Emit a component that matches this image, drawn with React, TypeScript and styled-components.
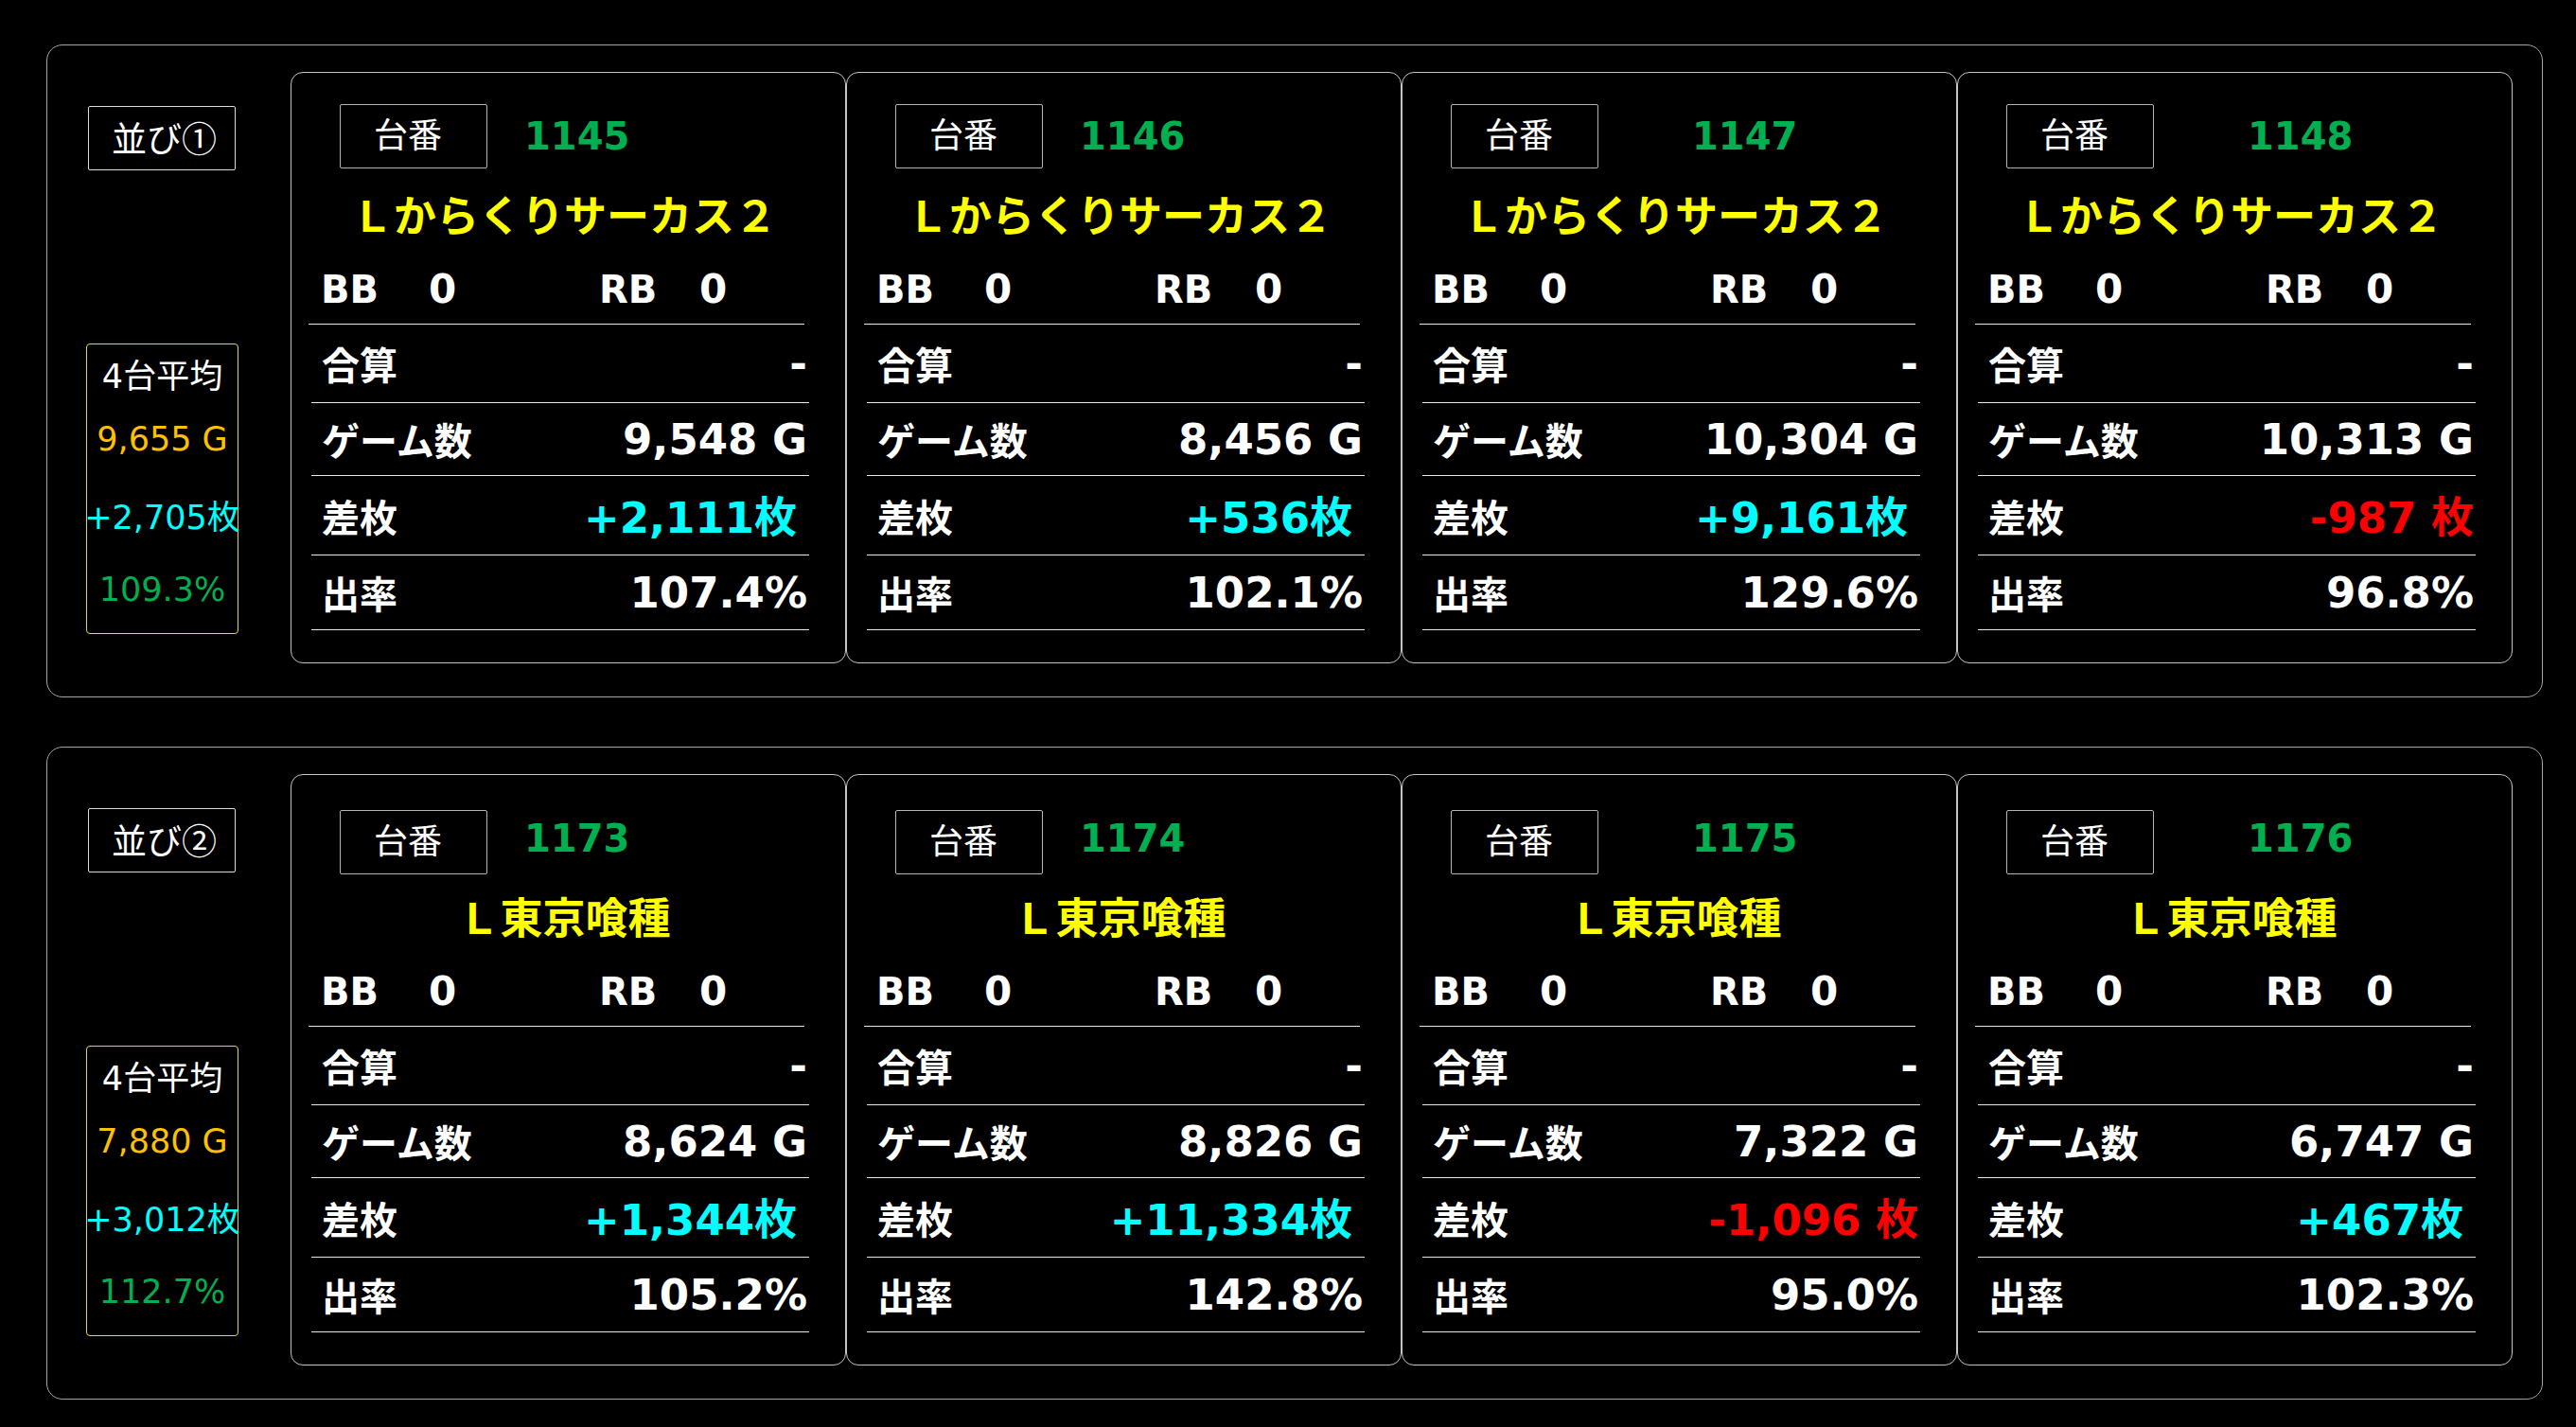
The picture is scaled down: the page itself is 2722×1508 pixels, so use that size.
import React from 'react';
import styled, { createGlobalStyle } from 'styled-components';

const GlobalStyle = createGlobalStyle`
  html, body { margin: 0; padding: 0; background: #000; }
  body {
    font-family: "DejaVu Sans", "Noto Sans CJK JP", sans-serif;
    color: #fff;
  }
`;

const Page = styled.div`
  width: 2722px;
  min-height: 1508px;
  box-sizing: border-box;
  padding: 47px 35px 0 49px;
  display: flex;
  flex-direction: column;
  gap: 52px;
  background: #000;
`;

const Panel = styled.section`
  box-sizing: border-box;
  width: 2638px;
  height: 690px;
  border: 1px solid #a4a4a4;
  border-radius: 17px;
  display: flex;
  padding: 28px 32px 0 0;
`;

const SideColumn = styled.div`
  width: 257px;
  flex: none;
  display: flex;
  flex-direction: column;
`;

const GroupLabel = styled.div`
  box-sizing: border-box;
  width: 156px;
  height: 68px;
  margin: 36px 0 0 43px;
  border: 1px solid #dcdcdc;
  border-radius: 2px;
  padding-left: 24px;
  font-family: "Noto Sans CJK JP", sans-serif;
  font-size: 37px;
  line-height: 64px;
  white-space: nowrap;
`;

const AvgBox = styled.div`
  box-sizing: border-box;
  width: 161px;
  height: 307px;
  margin: 183px 0 0 41px;
  border: 1px solid #e2e200;
  border-radius: 4px;
  display: flex;
  flex-direction: column;
`;

const AvgRow = styled.div<{ $h: number; $color: string }>`
  height: ${(p) => p.$h}px;
  display: flex;
  align-items: center;
  justify-content: center;
  font-size: 35px;
  line-height: 1;
  color: ${(p) => p.$color};
  white-space: nowrap;
`;

const CardRow = styled.div`
  display: grid;
  grid-template-columns: repeat(4, 587px);
`;

const Card = styled.article`
  box-sizing: border-box;
  height: 625px;
  border: 1px solid #c4c4c4;
  border-radius: 13px;
  padding: 33px 38px 0 21px;
  display: flex;
  flex-direction: column;
`;

const Header = styled.div`
  height: 68px;
  display: flex;
  align-items: center;
  margin-left: 30px;
`;

const NoLabel = styled.div<{ $shift: number }>`
  box-sizing: border-box;
  flex: none;
  align-self: flex-start;
  width: 156px;
  height: 68px;
  margin-top: ${(p) => p.$shift}px;
  border: 1px solid #b4b4b4;
  border-radius: 2px;
  padding-left: 35px;
  font-size: 36px;
  line-height: 66px;
`;

const MachineNo = styled.div<{ $offset: number }>`
  margin-left: ${(p) => p.$offset}px;
  font-size: 40px;
  font-weight: 700;
  line-height: 1;
  color: #00b050;
`;

const Title = styled.h2`
  margin: 0 -29px 0 -21px;
  height: 94px;
  display: flex;
  align-items: center;
  justify-content: center;
  font-family: "Noto Sans CJK JP", sans-serif;
  font-weight: 700;
  font-size: 45px;
  line-height: 1;
  color: #ffff00;
  white-space: nowrap;
`;

const BonusRow = styled.div`
  box-sizing: border-box;
  height: 71px;
  margin: 0 5px 0 -3px;
  padding: 0 0 3px 13px;
  border-bottom: 1px solid #e6e6e6;
  display: grid;
  grid-template-columns: 114px 180px 106px auto;
  align-items: center;
  font-weight: 700;
  font-size: 40px;
  line-height: 1;
`;

const BonusCount = styled.span`
  font-size: 42px;
`;

const DataRow = styled.div<{ $h: number }>`
  box-sizing: border-box;
  height: ${(p) => p.$h}px;
  border-bottom: 1px solid #e6e6e6;
  display: flex;
  justify-content: space-between;
  align-items: center;
  padding: 0 2px 0 11px;
  line-height: 1;
`;

const RowLabel = styled.span`
  font-family: "Noto Sans CJK JP", sans-serif;
  font-weight: 700;
  font-size: 40px;
`;

const RowValue = styled.span<{ $color: string; $trail: number; $dy: number }>`
  font-weight: 700;
  font-size: 45px;
  color: ${(p) => p.$color};
  padding-right: ${(p) => p.$trail}px;
  margin-top: ${(p) => p.$dy}px;
  white-space: nowrap;
`;

type Machine = {
  no: string;
  games: string;
  diff: string;
  rate: string;
};

type Group = {
  label: string;
  title: string;
  boxShift: number;
  avg: { games: string; diff: string; rate: string };
  machines: Machine[];
};

const groups: Group[] = [
  {
    label: '並び①',
    title: 'Ｌからくりサーカス２',
    boxShift: 0,
    avg: { games: '9,655 G', diff: '+2,705枚', rate: '109.3%' },
    machines: [
      { no: '1145', games: '9,548 G', diff: '+2,111枚', rate: '107.4%' },
      { no: '1146', games: '8,456 G', diff: '+536枚', rate: '102.1%' },
      { no: '1147', games: '10,304 G', diff: '+9,161枚', rate: '129.6%' },
      { no: '1148', games: '10,313 G', diff: '-987 枚', rate: '96.8%' },
    ],
  },
  {
    label: '並び②',
    title: 'Ｌ東京喰種',
    boxShift: 4,
    avg: { games: '7,880 G', diff: '+3,012枚', rate: '112.7%' },
    machines: [
      { no: '1173', games: '8,624 G', diff: '+1,344枚', rate: '105.2%' },
      { no: '1174', games: '8,826 G', diff: '+11,334枚', rate: '142.8%' },
      { no: '1175', games: '7,322 G', diff: '-1,096 枚', rate: '95.0%' },
      { no: '1176', games: '6,747 G', diff: '+467枚', rate: '102.3%' },
    ],
  },
];

const numberOffsets = [39, 39, 99, 99];

function MachineCard({ m, title, index, shift }: { m: Machine; title: string; index: number; shift: number }) {
  const negative = m.diff.startsWith('-');
  return (
    <Card>
      <Header>
        <NoLabel $shift={shift}>台番</NoLabel>
        <MachineNo $offset={numberOffsets[index]}>{m.no}</MachineNo>
      </Header>
      <Title>{title}</Title>
      <BonusRow>
        <span>BB</span>
        <BonusCount>0</BonusCount>
        <span>RB</span>
        <BonusCount>0</BonusCount>
      </BonusRow>
      <DataRow $h={83}>
        <RowLabel>合算</RowLabel>
        <RowValue $color="#fff" $trail={0} $dy={0}>-</RowValue>
      </DataRow>
      <DataRow $h={77}>
        <RowLabel>ゲーム数</RowLabel>
        <RowValue $color="#fff" $trail={0} $dy={0}>{m.games}</RowValue>
      </DataRow>
      <DataRow $h={84}>
        <RowLabel>差枚</RowLabel>
        <RowValue $color={negative ? '#ff0000' : '#00ffff'} $trail={negative ? 0 : 11} $dy={6}>
          {m.diff}
        </RowValue>
      </DataRow>
      <DataRow $h={79}>
        <RowLabel>出率</RowLabel>
        <RowValue $color="#fff" $trail={0} $dy={0}>{m.rate}</RowValue>
      </DataRow>
    </Card>
  );
}

export default function App() {
  return (
    <>
      <GlobalStyle />
      <Page>
        {groups.map((g) => (
          <Panel key={g.label}>
            <SideColumn>
              <GroupLabel>{g.label}</GroupLabel>
              <AvgBox>
                <AvgRow $h={68} $color="#ffffff">4台平均</AvgRow>
                <AvgRow $h={64} $color="#ffc000">{g.avg.games}</AvgRow>
                <AvgRow $h={102} $color="#00ffff">{g.avg.diff}</AvgRow>
                <AvgRow $h={50} $color="#00b050">{g.avg.rate}</AvgRow>
              </AvgBox>
            </SideColumn>
            <CardRow>
              {g.machines.map((m, i) => (
                <MachineCard key={m.no} m={m} title={g.title} index={i} shift={g.boxShift} />
              ))}
            </CardRow>
          </Panel>
        ))}
      </Page>
    </>
  );
}
